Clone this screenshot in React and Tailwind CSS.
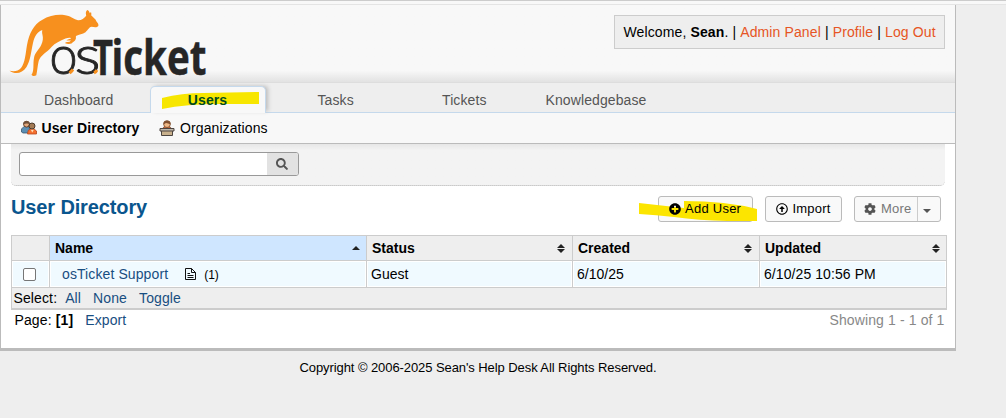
import { FaSearch, FaPlusCircle, FaRegArrowAltCircleUp, FaCog } from 'react-icons/fa';

function Logo() {
  return (
    <svg className="ml-[7px] mt-[3px] block h-[74px] w-[214px] overflow-visible" viewBox="8 8 214 74">
      <path
        fill="#f7901e"
        d="M9.500 70.800 C14 71.500 18 71.500 21 68 C25 63 25.500 54 27 45 C29 33 34 24.500 42 20 C49 15.500 57 14.300 64 15 C71 15.800 74 19.500 78 20.300 C81.500 20.500 84 18 86.200 15.700 C85.500 13 85.800 11 87.300 10 C88.800 10.500 89.300 11.800 89.800 13.300 C91 11.500 91.500 12 91.300 15.500 C93 17.500 95.500 18.500 96.500 21.500 C98 23 98.800 24.500 98.300 26 C97 27.800 94.500 27.400 91.500 26.800 C89.300 27 88 30 85.500 32.300 C82.500 34.500 79 34.300 76 36 C75.500 37.500 76.500 38 75.500 39.500 C75.500 41 72.500 42 71.500 43.500 C69.500 44.300 67 44 65.200 43.200 C65 42.400 66 42.100 69.500 41.800 L71 40.500 L66.500 40.500 C66.500 39.500 69 39.500 71 38.500 C71.500 37.500 68 37.500 65.500 38.500 C60 41 55 43 51.500 47 C47 52.500 40.500 55 38.700 61 C37.500 66 37.500 70 36.300 75.200 C34.500 76.500 32.500 76.200 31.500 74.700 C34.500 71 32.800 64 34 58 C34.800 52.500 39 49.500 41.200 45 C43 41 43.200 38 42.500 35 C42 32.500 42 31.500 42.300 30 C37.500 31.500 34.500 36 33 43 C31 52 30.300 61 26.500 67 C22 74 15 74.500 9.500 70.800 Z"
      />
      <g fill="#262626" stroke="#262626">
        <text x="49.500" y="74.300" textLength="28" lengthAdjust="spacingAndGlyphs" fontFamily="Lato, sans-serif" fontWeight="300" fontSize="54" strokeWidth=".9">o</text>
        <text x="74.500" y="74.300" textLength="26" lengthAdjust="spacingAndGlyphs" fontFamily="Lato, sans-serif" fontWeight="300" fontSize="54" strokeWidth=".9">s</text>
        <text x="93" y="75" textLength="20" lengthAdjust="spacingAndGlyphs" fontFamily="'Open Sans', sans-serif" fontWeight="700" fontSize="48" strokeWidth=".5">T</text>
        <text x="111.500" y="75" textLength="95" lengthAdjust="spacingAndGlyphs" fontFamily="'Open Sans', sans-serif" fontWeight="700" fontSize="48" strokeWidth=".5">icket</text>
      </g>
      <path d="M69.500 73 Q71.500 71.500 73 69.500 M94 73 Q96 72 97 70" stroke="#f7901e" strokeWidth="3" fill="none" />
    </svg>
  );
}

function PeopleIcon() {
  return (
    <svg className="h-4 w-4" viewBox="0 0 16 16">
      <path d="M.5 12 V9 L3 6.500 H8 L9 13 H2 Z" fill="#5b8fb4" stroke="#38566e" strokeWidth=".8" />
      <circle cx="5.500" cy="4.200" r="2.900" fill="#e3a87c" stroke="#5f3e29" />
      <path d="M2.300 4.500 Q2 1 5.500 1 Q9 1 8.700 4 Q5 3 2.300 4.500Z" fill="#705039" />
      <path d="M6.500 14 L7.200 10.500 L9.500 9 H13 L15.500 11 V14 Z" fill="#f5702f" stroke="#b8481c" strokeWidth=".8" />
      <circle cx="11" cy="6" r="3" fill="#a37b55" stroke="#4b3a2b" />
      <path d="M9.800 9.800 L11.300 12.500 L12.800 9.800" fill="#ffe2ba" />
    </svg>
  );
}

function DeskIcon() {
  return (
    <svg className="h-4 w-4" viewBox="0 0 16 16">
      <path d="M3.500 9 Q4 6.500 7 6.500 H9 Q12 6.500 12.500 9 Z" fill="#e36d35" stroke="#79432a" strokeWidth=".7" />
      <circle cx="8" cy="4.200" r="3.300" fill="#f0b885" stroke="#6f4224" strokeWidth=".8" />
      <path d="M4.400 4.500 Q4 .4 8 .4 Q12 .4 11.600 4.500 Q9 3 7 3Z" fill="#80502f" />
      <path d="M2.500 10.500 H13.500 V15.500 H2.500Z" fill="#c8b08c" stroke="#4c4540" />
      <path d="M1 8.500 H15 V11 H1Z" fill="#c0b8ac" stroke="#4c4540" />
    </svg>
  );
}

function Sort({ up }) {
  return (
    <svg className="h-[9px] w-[8px]" viewBox="0 0 8 9">
      {up ? <path d="M0 6 L4 2 L8 6Z" fill="#222" /> : <path d="M0 4 L4 0 L8 4Z M0 5 L4 9 L8 5Z" fill="#222" />}
    </svg>
  );
}

function Head({ children, up }) {
  return (
    <div className={`flex items-center justify-between border-r border-[#ccc] pl-[5px] ${up ? 'bg-[#cfe6ff] pr-[6px]' : 'pr-[7px]'}`}>
      <span>{children}</span>
      <Sort up={up} />
    </div>
  );
}

const columns = 'grid grid-cols-[38px_317px_206px_187px_186px]';

export default function App() {
  return (
    <div className="h-[418px] w-[1006px] overflow-hidden bg-[#eee] font-['Liberation_Sans',Arial,sans-serif] text-[14px] leading-[16px] text-black">
      <div className="h-[5px] border-b border-t border-b-[#e4e4e4] border-t-[#ccc] bg-[#f8f8f8]" />
      <div className="relative h-[346px] w-[956px] border-b-[3px] border-l border-r border-[#bbb] bg-white">
        <header className="flex h-[77px] justify-between bg-linear-to-b from-[#f8f8f8] from-85% to-[#e2e2e2]">
          <Logo />
          <div className="mr-[10px] mt-[10px] flex h-[34px] w-[331px] items-center whitespace-pre border border-[#ccc] bg-[#eee] pl-[8.500px] tracking-[0.12px]">
            <span>Welcome, </span><b>Sean</b><span>. | </span><span className="text-[#e65524]">Admin Panel</span><span> | </span><span className="text-[#e65524]">Profile</span><span> | </span><span className="text-[#e65524]">Log Out</span>
          </div>
        </header>
        <nav className="relative flex h-[31px] border-b border-t border-b-[#c5d9ec] border-t-[#ddd] bg-[#eee] tracking-[0.1px] text-[#555]">
          <div className="w-[149px] pl-[43px] pt-[9px]">Dashboard</div>
          <div className="relative mt-[3px] h-[27px] w-[116px] rounded-t-[5px] border border-b-0 border-[#c5d9ec] bg-[#f8f8f8] pr-[1px] pt-[5px] text-center font-bold shadow-[3px_-1px_4px_-1px_#bbb]">
            <svg className="absolute left-[10px] top-[5px] h-[17px] w-[100px]" viewBox="0 0 100 17"><path d="M1 6 Q21 1 42 1 L98 0 V12 L60 12 Q25 12 1 17Z" fill="#f7e600" /></svg>
            <span className="relative text-[#004a20]">Users</span>
          </div>
          <div className="w-[125px] pl-[51.5px] pt-[9px]">Tasks</div>
          <div className="w-[104px] pl-[51px] pt-[9px]">Tickets</div>
          <div className="pl-[50.5px] pt-[9px]">Knowledgebase</div>
        </nav>
        <div className="flex h-[31px] items-center border-b border-[#bbb] bg-[#f8f8f8] pl-[20px] tracking-[0.1px]">
          <PeopleIcon />
          <b className="ml-[4.500px] w-[117.500px]">User Directory</b>
          <DeskIcon />
          <span className="ml-[5px]">Organizations</span>
        </div>
        <div className="ml-[10px] h-[42px] w-[934px] rounded-b-[5px] border-b border-dotted border-[#bbb] bg-linear-to-b from-[#e7e7e7] to-[#f3f3f3] to-15% pl-[8px] pt-[8px]">
          <div className="flex h-[24px] w-[280px] overflow-hidden rounded-[3px] border border-[#999] bg-white">
            <div className="grow" />
            <div className="flex w-[31px] items-center justify-center bg-[#e2e2e2] pr-[2px] text-[#555]"><FaSearch size={12} /></div>
          </div>
        </div>
        <div className="flex h-[49px] items-start pl-[10px] pr-[14px] pt-[10px]">
          <h2 className="grow text-[20px] font-bold leading-[22px] tracking-[-0.13px] text-[#0a568e]">User Directory</h2>
          <div className="relative flex h-[26px] w-[95px] items-center rounded-[3px] border border-[#bbb] bg-[#f9f9f9] pl-[10px] text-[13px]">
            <svg className="absolute left-[-20px] top-[4px] h-[20px] w-[120px]" viewBox="0 0 120 20"><path d="M0 2 L45 7 V0 Q87 0 118 8 V20 Q72 21 35 16 Q17 14 0 13Z" fill="#fce500" /></svg>
            <FaPlusCircle className="relative" size={12} /><span className="relative ml-[4px] whitespace-nowrap tracking-[0.25px]">Add User</span>
          </div>
          <div className="ml-[12px] flex h-[26px] w-[77px] items-center rounded-[3px] border border-[#bbb] bg-[#f9f9f9] pl-[10px] text-[13px]">
            <FaRegArrowAltCircleUp size={12} /><span className="ml-[4.500px] tracking-[0.2px]">Import</span>
          </div>
          <div className="ml-[12px] flex h-[26px] w-[87px] items-center rounded-[3px] border border-[#bbb] bg-[#f9f9f9] pl-[9px] text-[13px] text-[#777]">
            <FaCog size={12} color="#555" /><span className="ml-[5px] w-[36px] tracking-[0.2px]">More</span>
            <span className="flex h-full grow items-center justify-center border-l border-[#ccc] pr-[4px] pt-[3px]"><svg className="h-[4px] w-[8px]" viewBox="0 0 8 4"><path d="M0 0H8L4 4Z" fill="#555" /></svg></span>
          </div>
        </div>
        <div className="ml-[10px] w-[936px] border-b-2 border-l border-r border-t border-[#ccc] bg-[#eee]">
          <div className={`${columns} h-[25px] border-b border-[#ccc] font-bold`}>
            <div className="border-r border-[#ccc]" />
            <Head up>Name</Head><Head>Status</Head><Head>Created</Head>
            <div className="flex items-center justify-between pl-[5px] pr-[6px]"><span>Updated</span><Sort /></div>
          </div>
          <div className={`${columns} h-[27px] items-stretch border-b border-[#ccc] bg-[#f0faff] *:flex *:items-center *:border-r *:border-[#ccc] *:shadow-[inset_0_0_0_1px_white]`}>
            <div className="pl-[11px]"><span className="h-[13px] w-[13px] rounded-[2px] border border-[#767676] bg-white" /></div>
            <div className="pl-[12px]">
              <span className="tracking-[0.1px] text-[#184e81]">osTicket Support</span>
              <svg className="ml-[17px] h-[12px] w-[11px]" viewBox="0 0 11 12" fill="none" stroke="#111"><path d="M.5.5H6.500L10.500 4.500V11.500H.5Z M6.500.5V4.500H10.500 M2.500 5.500H5 M2.500 7.500H8.500 M2.500 9.500H8.500" /></svg>
              <span className="ml-[8px] pt-px text-[12px]">(1)</span>
            </div>
            <div className="pl-[4px]">Guest</div><div className="pl-[4px]">6/10/25</div><div className="border-r-0! pl-[4px] tracking-[0.08px]">6/10/25 10:56 PM</div>
          </div>
          <div className="flex h-[20px] items-center pl-[1.500px] tracking-[0.12px]">Select:<span className="ml-[8px] text-[#184e81]">All</span><span className="ml-[12px] text-[#184e81]">None</span><span className="ml-[12px] text-[#184e81]">Toggle</span></div>
        </div>
        <div className="flex pl-[13.500px] pr-[10.500px] pt-[2px] tracking-[0.12px]">Page:<b className="ml-[4px]">[1]</b><span className="ml-[12px] text-[#184e81]">Export</span><span className="ml-auto text-[#888]">Showing 1 - 1 of 1</span></div>
      </div>
      <footer className="w-[956px] pt-[9px] text-center text-[13px] tracking-[-0.08px]">Copyright © 2006-2025 Sean's Help Desk All Rights Reserved.</footer>
    </div>
  );
}
